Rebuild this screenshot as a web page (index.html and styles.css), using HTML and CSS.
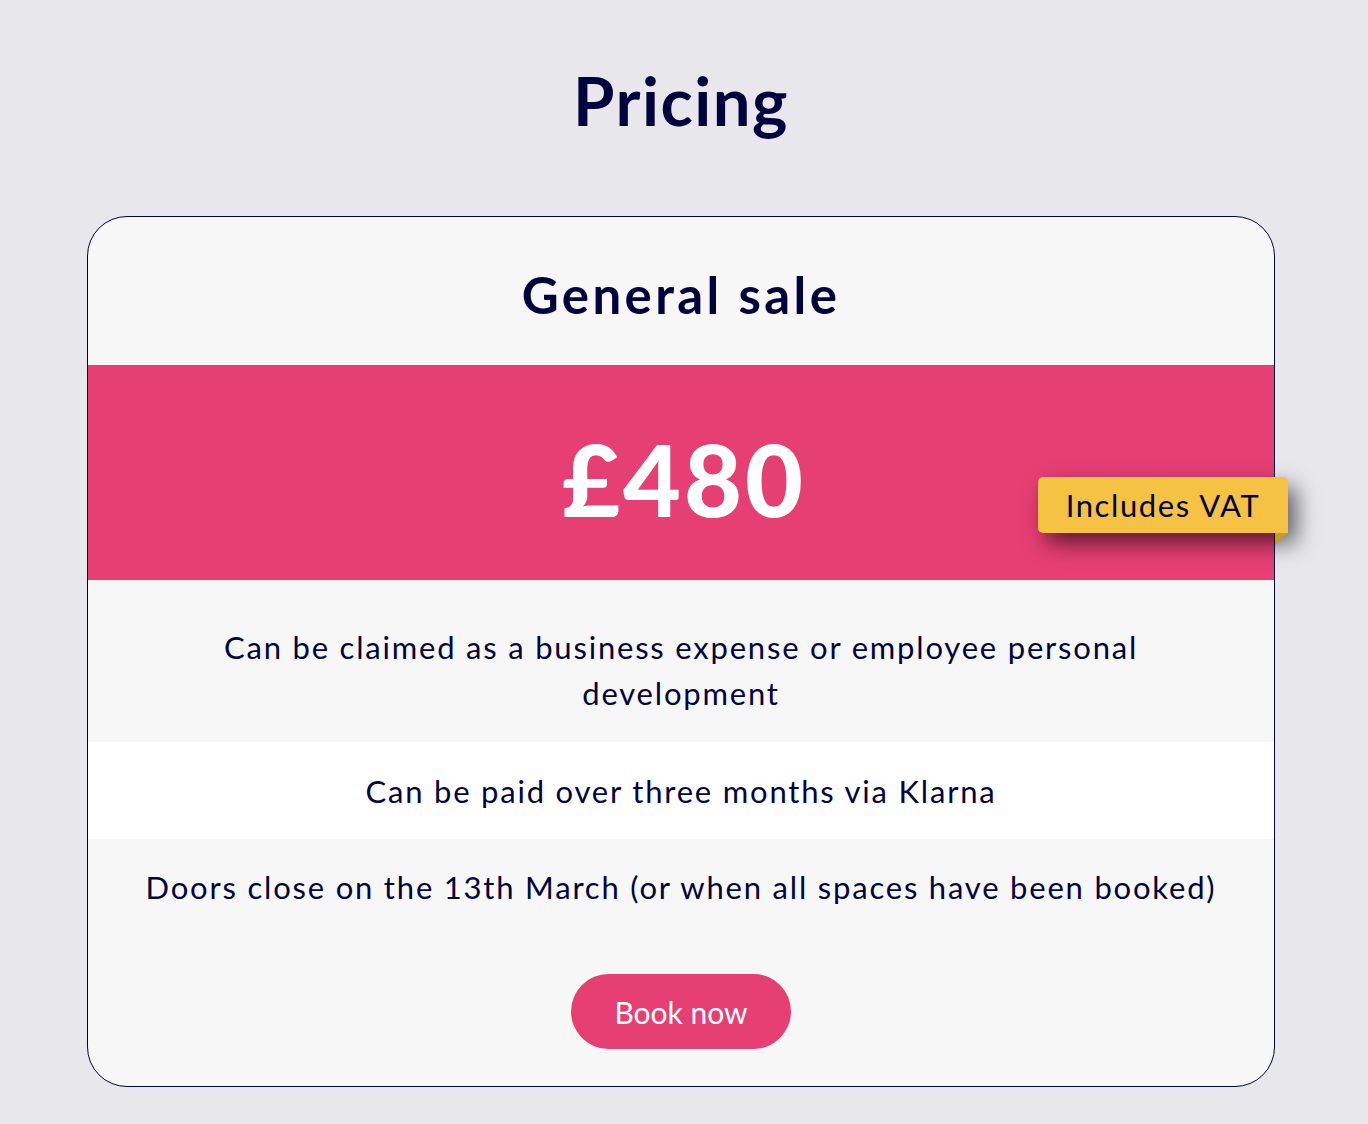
FILE: index.html
```html
<!DOCTYPE html>
<html lang="en">
<head>
<meta charset="utf-8">
<title>Pricing</title>
<link rel="stylesheet" href="styles.css">
</head>
<body>
<main class="page">
  <h1 class="title">Pricing</h1>
  <section class="card">
    <h2 class="card-title">General sale</h2>
    <div class="price-band">
      <div class="price">£480</div>
      <div class="badge">Includes VAT</div>
    </div>
    <p class="row row-a">Can be claimed as a business expense or employee personal development</p>
    <p class="row row-b">Can be paid over three months via Klarna</p>
    <div class="row row-c">
      <p class="row-text">Doors close on the 13th March (or when all spaces have been booked)</p>
      <a class="book" href="#">Book now</a>
    </div>
  </section>
</main>
</body>
</html>
```
FILE: styles.css
```css
* { box-sizing: border-box; }
html, body { margin: 0; padding: 0; }
body {
  background: #e8e7ec;
  font-family: "Lato", "Noto Sans", sans-serif;
  color: #01033c;
  padding-right: 6px;
}
.page {
  width: 1188px;
  margin: 0 auto;
  padding-top: 56px;
}
.title {
  margin: 0;
  text-align: center;
  font-size: 67px;
  font-weight: 700;
  letter-spacing: 1.5px;
  line-height: 88px;
}
.card {
  margin-top: 72px;
  border: 1px solid #01033c;
  border-radius: 40px;
  background: #f7f7f7;
}
.card-title {
  margin: 0;
  text-align: center;
  font-size: 51px;
  font-weight: 700;
  letter-spacing: 3.4px;
  line-height: 60px;
  padding: 48px 0 40px;
}
.price-band {
  position: relative;
  background: #e63f74;
  height: 215px;
  display: flex;
  align-items: center;
  justify-content: center;
}
.price {
  color: #fff;
  font-size: 100px;
  font-weight: 900;
  letter-spacing: 3px;
  line-height: 1;
  padding-top: 10px;
  padding-left: 6px;
}
.badge {
  position: absolute;
  right: -14px;
  top: 112px;
  width: 250px;
  height: 56px;
  background: #f5c243;
  border-radius: 5px 5px 0 5px;
  box-shadow: 8px 10px 22px rgba(0, 0, 0, 0.6);
  font-size: 31px;
  letter-spacing: 1.6px;
  line-height: 56px;
  text-align: center;
  color: #01033c;
}
.badge::after {
  content: "";
  position: absolute;
  right: 0;
  bottom: -12px;
  border-top: 12px solid #c79a2c;
  border-right: 13px solid transparent;
}
.row {
  margin: 0;
  text-align: center;
  font-size: 31px;
  letter-spacing: 1.8px;
  line-height: 46px;
}
.row-a {
  padding: 44px 110px 26px;
  background: #f7f7f7;
}
.row-b {
  padding: 26px 0 25px;
  background: #ffffff;
}
.row-c {
  padding: 25px 0 37px;
  display: flex;
  flex-direction: column;
  align-items: center;
}
.row-text { margin: 0; }
.book {
  margin-top: 64px;
  display: flex;
  align-items: center;
  justify-content: center;
  width: 220px;
  height: 75px;
  border-radius: 38px;
  background: #e63f74;
  color: #fff;
  text-decoration: none;
  font-size: 30px;
  letter-spacing: 0;
}
```
